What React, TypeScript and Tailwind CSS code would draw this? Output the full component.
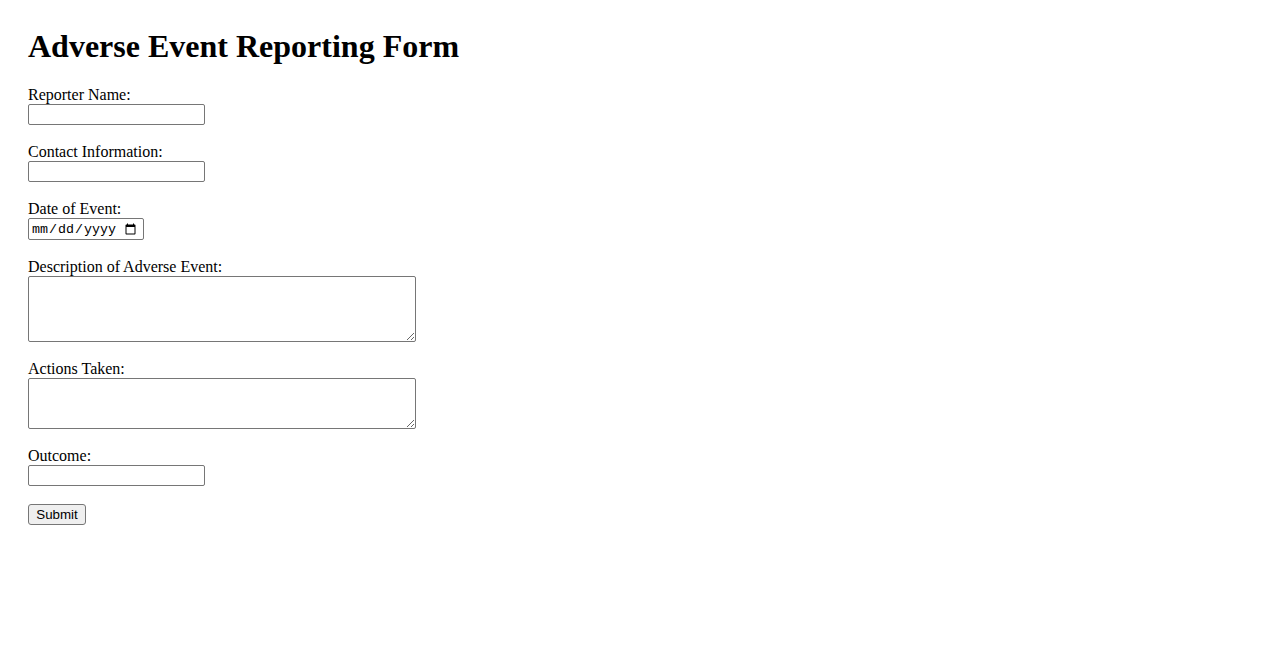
export default function App() {
  const inputCls =
    "block w-[177px] h-[21px] border border-[#767676] rounded-[2px] px-[2px] text-[13.33px] bg-white";
  const textareaCls =
    "block w-[388px] border border-[#767676] rounded-[2px] p-[2px] text-[13.33px] leading-[15px] font-['Liberation_Mono',monospace] bg-white resize";

  return (
    <div className="min-h-screen bg-white text-black font-['Liberation_Serif','Times_New_Roman',serif] pl-[28px] pt-[28px]">
      <h1 className="text-[32px] leading-[37px] font-bold">Adverse Event Reporting Form</h1>
      <form className="mt-[21px]" onSubmit={(e) => e.preventDefault()}>
        <label htmlFor="reporter" className="block text-[16px] leading-[18px]">Reporter Name:</label>
        <input id="reporter" type="text" className={inputCls} />

        <label htmlFor="contact" className="block mt-[18px] text-[16px] leading-[18px]">Contact Information:</label>
        <input id="contact" type="text" className={inputCls} />

        <label htmlFor="date" className="block mt-[18px] text-[16px] leading-[18px]">Date of Event:</label>
        <input
          id="date"
          type="date"
          className="block w-[116px] h-[22px] border border-[#767676] rounded-[2px] pl-[2px] pr-[4px] pt-[3px] pb-[1px] text-[13.33px] font-['Liberation_Mono',monospace] bg-white"
        />

        <label htmlFor="desc" className="block mt-[18px] text-[16px] leading-[18px]">Description of Adverse Event:</label>
        <textarea id="desc" rows={4} className={`${textareaCls} h-[66px]`} />

        <label htmlFor="actions" className="block mt-[18px] text-[16px] leading-[18px]">Actions Taken:</label>
        <textarea id="actions" rows={3} className={`${textareaCls} h-[51px]`} />

        <label htmlFor="outcome" className="block mt-[18px] text-[16px] leading-[18px]">Outcome:</label>
        <input id="outcome" type="text" className={inputCls} />

        <button
          type="submit"
          className="block mt-[18px] w-[58px] h-[21px] border border-[#767676] rounded-[3px] bg-[#efefef] text-[13.33px] font-['Liberation_Sans',Arial,sans-serif] leading-none"
        >
          Submit
        </button>
      </form>
    </div>
  );
}
